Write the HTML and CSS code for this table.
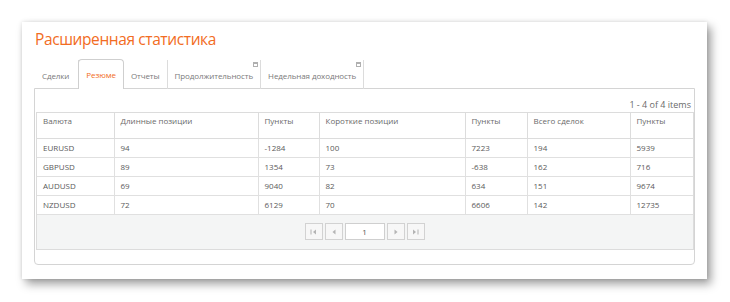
FILE: index.html
```html
<!DOCTYPE html>
<html lang="ru">
<head>
<meta charset="utf-8">
<title>Расширенная статистика</title>
<link rel="stylesheet" href="styles.css">
</head>
<body>
<div class="page">
  <div class="card">
    <h1 class="title">Расширенная статистика</h1>
    <div class="tabs">
      <div class="tab first">Сделки</div>
      <div class="tab active">Резюме</div>
      <div class="tab">Отчеты</div>
      <div class="tab">Продолжительность<span class="win"></span></div>
      <div class="tab">Недельная доходность<span class="win"></span></div>
    </div>
    <div class="panel">
      <div class="summary">1 - 4 of 4 items</div>
      <div class="grid">
        <table class="data">
          <colgroup>
            <col class="c1"><col class="c2"><col class="c3"><col class="c4"><col class="c5"><col class="c6"><col class="c7">
          </colgroup>
          <thead>
            <tr><th>Валюта</th><th>Длинные позиции</th><th>Пункты</th><th>Короткие позиции</th><th>Пункты</th><th>Всего сделок</th><th>Пункты</th></tr>
          </thead>
          <tbody>
            <tr><td>EURUSD</td><td>94</td><td>-1284</td><td>100</td><td>7223</td><td>194</td><td>5939</td></tr>
            <tr><td>GBPUSD</td><td>89</td><td>1354</td><td>73</td><td>-638</td><td>162</td><td>716</td></tr>
            <tr><td>AUDUSD</td><td>69</td><td>9040</td><td>82</td><td>634</td><td>151</td><td>9674</td></tr>
            <tr><td>NZDUSD</td><td>72</td><td>6129</td><td>70</td><td>6606</td><td>142</td><td>12735</td></tr>
          </tbody>
        </table>
        <div class="pager">
          <span class="pbtn"><svg width="7" height="6" viewBox="0 0 7 6"><rect x="0.5" y="0.5" width="1" height="5" fill="#b4b4b4"/><path d="M6 0.5 L3 3 L6 5.5 Z" fill="#b4b4b4"/></svg></span>
          <span class="pbtn"><svg width="4" height="6" viewBox="0 0 4 6"><path d="M3.5 0.5 L0.5 3 L3.5 5.5 Z" fill="#b4b4b4"/></svg></span>
          <span class="pinput">1</span>
          <span class="pbtn"><svg width="4" height="6" viewBox="0 0 4 6"><path d="M0.5 0.5 L3.5 3 L0.5 5.5 Z" fill="#b4b4b4"/></svg></span>
          <span class="pbtn"><svg width="7" height="6" viewBox="0 0 7 6"><path d="M1 0.5 L4 3 L1 5.5 Z" fill="#b4b4b4"/><rect x="5.5" y="0.5" width="1" height="5" fill="#b4b4b4"/></svg></span>
        </div>
      </div>
    </div>
  </div>
</div>
</body>
</html>
```

FILE: styles.css
```css
html, body {
  margin: 0;
  padding: 0;
  background: #ffffff;
}

.page {
  padding: 22px;
  font-family: "Open Sans", "Noto Sans", sans-serif;
}

.card {
  width: 685px;
  height: 257px;
  box-sizing: border-box;
  background: #ffffff;
  padding: 7px 12px 0 12px;
  box-shadow: 0 0 4px rgba(0, 0, 0, 0.12), 4px 5px 9px rgba(0, 0, 0, 0.38);
}

.title {
  margin: 0 0 0 1px;
  font-size: 15.5px;
  line-height: 20px;
  font-weight: 400;
  color: #f26c23;
  letter-spacing: -0.4px;
}

.tabs {
  display: flex;
  margin: 10px 0 0 1px;
  height: 29px;
  position: relative;
  z-index: 1;
}

.tab {
  position: relative;
  box-sizing: border-box;
  height: 29px;
  padding: 1px 7px 0 7px;
  display: flex;
  align-items: center;
  font-size: 8px;
  color: #7a7a7a;
  letter-spacing: -0.1px;
  border-right: 1px solid #dcdcdc;
  margin-top: 1px;
}

.tab.first {
  padding-right: 9px;
}

.tab.active {
  margin-top: 0;
  height: 30px;
  padding-top: 0;
  padding-bottom: 1px;
  color: #f26c23;
  background: #ffffff;
  border: 1px solid #cfcfcf;
  border-bottom: none;
  border-radius: 4px 4px 0 0;
  margin-left: -1px;
}

.win {
  position: absolute;
  top: 2px;
  right: 2px;
  width: 3px;
  height: 2px;
  border: 1px solid #b0b0b0;
  border-top-width: 2px;
}

.panel {
  box-sizing: border-box;
  height: 177px;
  border: 1px solid #d4d4d4;
  border-radius: 0 0 4px 4px;
  padding: 0 1px;
}

.summary {
  text-align: right;
  font-size: 9px;
  line-height: 12px;
  color: #6a6a6a;
  margin-top: 10px;
  padding-right: 2px;
  height: 12px;
}

.grid {
  margin-top: 1px;
  border: 1px solid #dcdcdc;
  width: 658px;
  box-sizing: border-box;
}

.data {
  width: 656px;
  table-layout: fixed;
  border-collapse: collapse;
  font-size: 8px;
  color: #5a5a5a;
}

.c1 { width: 77px; }
.c2 { width: 144px; }
.c3 { width: 61px; }
.c4 { width: 146px; }
.c5 { width: 62px; }
.c6 { width: 103px; }
.c7 { width: 63px; }

.data th {
  text-align: left;
  font-weight: 400;
  color: #6a6a6a;
  vertical-align: top;
  height: 25px;
  box-sizing: border-box;
  padding: 2px 6px 0 6px;
  line-height: 12px;
  border-left: 1px solid #dcdcdc;
  border-bottom: 1px solid #dcdcdc;
}

.data td {
  height: 19px;
  box-sizing: border-box;
  padding: 0 6px;
  line-height: 12px;
  border-left: 1px solid #e0e0e0;
  border-bottom: 1px solid #e0e0e0;
  white-space: nowrap;
}

.data th:first-child,
.data td:first-child {
  border-left: none;
}

.pager {
  display: flex;
  justify-content: center;
  align-items: center;
  gap: 2px;
  height: 34px;
  background: #f4f5f5;
  padding-right: 1px;
}

.pbtn {
  box-sizing: border-box;
  width: 18px;
  height: 17px;
  border: 1px solid #d2d2d2;
  background: #f7f7f7;
  display: flex;
  align-items: center;
  justify-content: center;
}

.pinput {
  box-sizing: border-box;
  width: 40px;
  height: 17px;
  border: 1px solid #cfcfcf;
  background: #ffffff;
  font-size: 8px;
  color: #555555;
  display: flex;
  align-items: center;
  justify-content: center;
}
```
